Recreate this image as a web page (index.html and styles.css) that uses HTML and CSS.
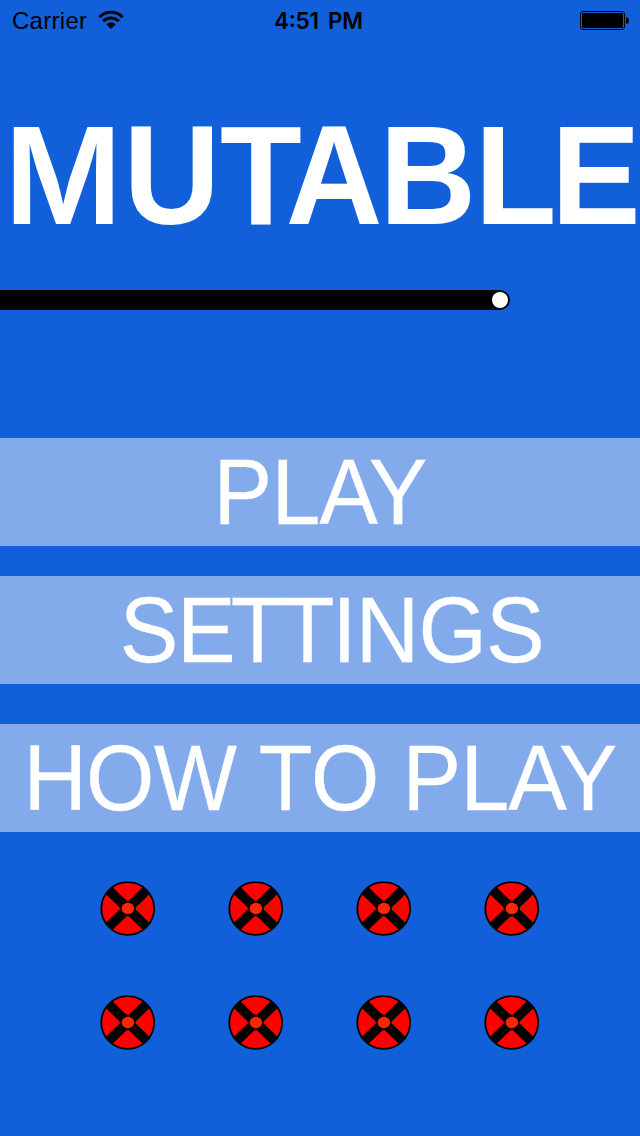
FILE: index.html
```
<!DOCTYPE html>
<html lang="en">
<head>
<meta charset="utf-8">
<title>Mutable</title>
<link rel="stylesheet" href="styles.css">
</head>
<body>
<svg class="defs" width="0" height="0" aria-hidden="true">
  <symbol id="disc" viewBox="0 0 56 56">
    <circle cx="27.700" cy="27.500" r="26.5" fill="#f00"/>
    <path d="M9 9.500 46.400 45.500M46.400 9.500 9 45.500" stroke="#000" stroke-width="9.600"/>
    <circle cx="27.700" cy="27.500" r="8" fill="#000"/>
    <circle cx="27.700" cy="27.500" r="26.400" fill="none" stroke="#000" stroke-width="1.800"/>
    <ellipse cx="27.900" cy="27.500" rx="6.200" ry="5.800" fill="#ff2600"/>
  </symbol>
</svg>
<main class="screen">
  <header class="status">
    <div class="carrier">
      <svg width="75" height="40"><text x="0" y="29" textLength="75">Carrier</text></svg>
      <svg class="wifi" width="26" height="20" viewBox="0 0 26 20">
        <path d="M1.400 7.200C8 .7 18 .7 24.600 7.200M5.200 11.300C9.600 7 16.400 7 20.800 11.300" fill="none" stroke="#000" stroke-width="3"/>
        <path d="M8.300 14.200Q13 10.200 17.700 14.200L13 19z"/>
      </svg>
    </div>
    <svg class="clock" width="90" height="40"><text x="0" y="29" textLength="89">4:51 PM</text></svg>
    <svg class="battery" width="50" height="20" viewBox="0 0 50 20">
      <rect x=".5" y=".5" width="44" height="18" rx="2.500" fill="none" stroke="#000"/>
      <rect x="2" y="2" width="41" height="15" rx="1"/>
      <path d="M46 6Q49 6.500 49 9.500T46 13z"/>
    </svg>
  </header>
  <h1 class="title"><svg width="640" height="170"><text x="66.5 180.8 274.7 351.8 450.4 542.8 627.4" y="134"><tspan class="wide">M</tspan>UTABLE</text></svg></h1>
  <div class="track"><span class="knob"></span></div>
  <nav class="menu">
    <a class="item"><svg width="640" height="108"><text x="258.2 314.8 370.7 423.6" y="86">PLAY</text></svg></a>
    <a class="item"><svg width="640" height="108"><text x="158.5 219.4 274.1 327.3 366.5 412.3 481.7 548.2" y="86">SETTINGS</text></svg></a>
    <a class="item last"><svg width="640" height="108"><text x="58.8 127.9 208 255.3 303.9 367.1 414.9 459.3 515.9 571.8 625.5" y="86">HOW TO PLAY</text></svg></a>
  </nav>
  <section class="discs">
    <svg><use href="#disc"/></svg><svg><use href="#disc"/></svg><svg><use href="#disc"/></svg><svg><use href="#disc"/></svg>
    <svg><use href="#disc"/></svg><svg><use href="#disc"/></svg><svg><use href="#disc"/></svg><svg><use href="#disc"/></svg>
  </section>
</main>
</body>
</html>
```
FILE: styles.css
```
body { margin: 0; }
svg { display: block; }
.defs { position: absolute; }
.screen {
  width: 640px;
  height: 1136px;
  overflow: hidden;
  background: #1160d9;
  font-family: "Liberation Sans", Arial, sans-serif;
}
.status {
  display: grid;
  grid-template-columns: 274px 1fr auto;
  height: 40px;
  font-size: 24px;
}
.carrier { display: flex; padding-left: 12px; }
.wifi { margin: 10px 0 0 11px; }
.clock { font-family: Inter, sans-serif; font-weight: 600; font-size: 22.5px; word-spacing: 4px; }
.battery { margin: 11px 10px 0 0; }
.title {
  margin: 50px 0 0;
  font-size: 141px;
  font-weight: 700;
}
.title text, .item text { fill: #fff; text-anchor: middle; }
.title text { transform: scale(.95, 1); }
.wide { font-family: Inter, sans-serif; font-size: 134px; font-weight: 600; }
.track {
  display: flex;
  align-items: center;
  justify-content: flex-end;
  box-sizing: border-box;
  width: 510px;
  height: 20px;
  margin-top: 30px;
  padding-right: 2px;
  border-radius: 0 10px 10px 0;
  background: #000;
}
.knob { width: 16px; height: 16px; border-radius: 50%; background: #fff; }
.menu {
  display: flex;
  flex-direction: column;
  gap: 30px;
  margin-top: 128px;
}
.item { height: 108px; background: #83abeb; font-size: 93.5px; }
.item text { transform: scale(.94, 1); stroke: #fff; stroke-width: .3px; }
.last { margin-top: 10px; }
.discs {
  display: grid;
  grid-template-columns: repeat(4, 128px);
  grid-auto-rows: 56px;
  row-gap: 58px;
  justify-content: center;
  justify-items: center;
  margin-top: 49px;
}
.discs svg { width: 56px; height: 56px; }
```
